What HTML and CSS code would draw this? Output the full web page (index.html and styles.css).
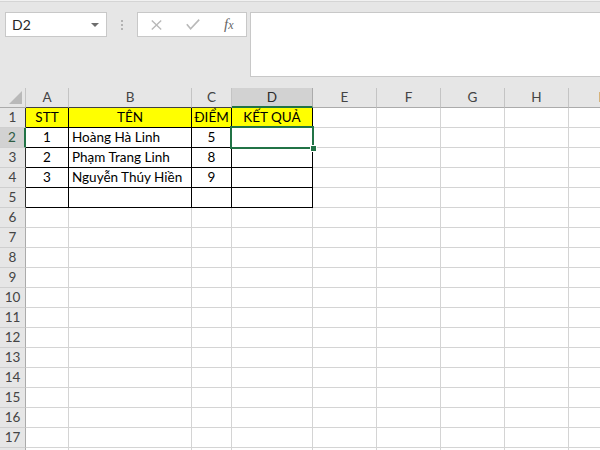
FILE: index.html
```html
<!DOCTYPE html>
<html lang="vi">
<head>
<meta charset="utf-8">
<title>Excel</title>
<link rel="stylesheet" href="styles.css">
</head>
<body>
<div class="app">
  <div class="formula-bar">
    <div class="namebox"><span class="ref">D2</span><span class="caret"></span></div>
    <div class="grip"><i></i><i></i><i></i></div>
    <div class="buttons">
      <svg class="ico-x" width="11" height="10" viewBox="0 0 11 10"><path d="M0.8 0.5 L10.2 9.5 M10.2 0.5 L0.8 9.5" stroke="#b9b9b9" stroke-width="1.4" fill="none"/></svg>
      <svg class="ico-ok" width="14" height="11" viewBox="0 0 14 11"><path d="M0.8 5.2 L4.6 9.8 L13.2 0.6" stroke="#b9b9b9" stroke-width="1.6" fill="none"/></svg>
      <span class="fx">f<small>x</small></span>
    </div>
    <div class="formula-input"></div>
  </div>

  <div class="sheet">
    <div class="row head">
      <div class="c corner"><svg width="26" height="20" viewBox="0 0 26 20"><polygon points="22,3 22,16 9,16" fill="#b9b9b9"/></svg></div>
      <div class="c ch dk">A</div><div class="c ch dk">B</div><div class="c ch dk">C</div><div class="c ch sel">D</div>
      <div class="c ch">E</div><div class="c ch">F</div><div class="c ch">G</div><div class="c ch">H</div><div class="c ch">I</div>
    </div>
    <div class="row">
      <div class="c rh bk">1</div>
      <div class="c b y ctr">STT</div><div class="c b y ctr">TÊN</div><div class="c b y ctr">ĐIỂM</div><div class="c b y ctr">KẾT QUẢ</div>
      <div class="c"></div><div class="c"></div><div class="c"></div><div class="c"></div><div class="c"></div>
    </div>
    <div class="row">
      <div class="c rh sel">2</div>
      <div class="c b ctr">1</div><div class="c b txt">Hoàng Hà Linh</div><div class="c b ctr">5</div><div class="c b"></div>
      <div class="c"></div><div class="c"></div><div class="c"></div><div class="c"></div><div class="c"></div>
    </div>
    <div class="row">
      <div class="c rh bk">3</div>
      <div class="c b ctr">2</div><div class="c b txt">Phạm Trang Linh</div><div class="c b ctr">8</div><div class="c b"></div>
      <div class="c"></div><div class="c"></div><div class="c"></div><div class="c"></div><div class="c"></div>
    </div>
    <div class="row">
      <div class="c rh bk">4</div>
      <div class="c b ctr">3</div><div class="c b txt">Nguyễn Thúy Hiền</div><div class="c b ctr">9</div><div class="c b"></div>
      <div class="c"></div><div class="c"></div><div class="c"></div><div class="c"></div><div class="c"></div>
    </div>
    <div class="row">
      <div class="c rh bk">5</div>
      <div class="c b"></div><div class="c b"></div><div class="c b"></div><div class="c b"></div>
      <div class="c"></div><div class="c"></div><div class="c"></div><div class="c"></div><div class="c"></div>
    </div>
    <div class="row"><div class="c rh">6</div><div class="c"></div><div class="c"></div><div class="c"></div><div class="c"></div><div class="c"></div><div class="c"></div><div class="c"></div><div class="c"></div><div class="c"></div></div>
    <div class="row"><div class="c rh">7</div><div class="c"></div><div class="c"></div><div class="c"></div><div class="c"></div><div class="c"></div><div class="c"></div><div class="c"></div><div class="c"></div><div class="c"></div></div>
    <div class="row"><div class="c rh">8</div><div class="c"></div><div class="c"></div><div class="c"></div><div class="c"></div><div class="c"></div><div class="c"></div><div class="c"></div><div class="c"></div><div class="c"></div></div>
    <div class="row"><div class="c rh">9</div><div class="c"></div><div class="c"></div><div class="c"></div><div class="c"></div><div class="c"></div><div class="c"></div><div class="c"></div><div class="c"></div><div class="c"></div></div>
    <div class="row"><div class="c rh">10</div><div class="c"></div><div class="c"></div><div class="c"></div><div class="c"></div><div class="c"></div><div class="c"></div><div class="c"></div><div class="c"></div><div class="c"></div></div>
    <div class="row"><div class="c rh">11</div><div class="c"></div><div class="c"></div><div class="c"></div><div class="c"></div><div class="c"></div><div class="c"></div><div class="c"></div><div class="c"></div><div class="c"></div></div>
    <div class="row"><div class="c rh">12</div><div class="c"></div><div class="c"></div><div class="c"></div><div class="c"></div><div class="c"></div><div class="c"></div><div class="c"></div><div class="c"></div><div class="c"></div></div>
    <div class="row"><div class="c rh">13</div><div class="c"></div><div class="c"></div><div class="c"></div><div class="c"></div><div class="c"></div><div class="c"></div><div class="c"></div><div class="c"></div><div class="c"></div></div>
    <div class="row"><div class="c rh">14</div><div class="c"></div><div class="c"></div><div class="c"></div><div class="c"></div><div class="c"></div><div class="c"></div><div class="c"></div><div class="c"></div><div class="c"></div></div>
    <div class="row"><div class="c rh">15</div><div class="c"></div><div class="c"></div><div class="c"></div><div class="c"></div><div class="c"></div><div class="c"></div><div class="c"></div><div class="c"></div><div class="c"></div></div>
    <div class="row"><div class="c rh">16</div><div class="c"></div><div class="c"></div><div class="c"></div><div class="c"></div><div class="c"></div><div class="c"></div><div class="c"></div><div class="c"></div><div class="c"></div></div>
    <div class="row"><div class="c rh">17</div><div class="c"></div><div class="c"></div><div class="c"></div><div class="c"></div><div class="c"></div><div class="c"></div><div class="c"></div><div class="c"></div><div class="c"></div></div>
    <div class="row"><div class="c rh">18</div><div class="c"></div><div class="c"></div><div class="c"></div><div class="c"></div><div class="c"></div><div class="c"></div><div class="c"></div><div class="c"></div><div class="c"></div></div>

    <div class="selection"><span class="handle"></span></div>
  </div>
</div>
</body>
</html>
```

FILE: styles.css
```css
html, body {
  margin: 0;
  padding: 0;
}
body {
  width: 600px;
  height: 450px;
  overflow: hidden;
  background: #e6e6e6;
  font-family: Lato, "Open Sans", "Liberation Sans", sans-serif;
  font-size: 13.5px;
  color: #000;
}
.app {
  width: 600px;
  height: 450px;
  overflow: hidden;
  background: #f1f1f1;
}

/* ---------- formula bar ---------- */
.formula-bar {
  display: flex;
  align-items: flex-start;
  height: 87px;
  box-sizing: border-box;
  margin-top: 1px;
  padding-top: 10px;
  border-top: 1px solid #d5d5d5;
  background: #e6e6e6;
}
.namebox {
  margin-left: 5px;
  width: 102px;
  height: 25px;
  box-sizing: border-box;
  border: 1px solid #c8c8c8;
  background: #fff;
  display: flex;
  align-items: center;
  justify-content: space-between;
  padding: 0 7px 0 6px;
}
.ref {
  font-size: 14px;
  color: #262626;
}
.caret {
  width: 0;
  height: 0;
  border-left: 4px solid transparent;
  border-right: 4px solid transparent;
  border-top: 4px solid #6d6d6d;
  margin-top: 1px;
}
.grip {
  width: 30px;
  height: 25px;
  display: flex;
  flex-direction: column;
  align-items: center;
  justify-content: center;
  gap: 2px;
}
.grip i {
  display: block;
  width: 2px;
  height: 2px;
  background: #b3b3b3;
}
.buttons {
  width: 110px;
  height: 25px;
  box-sizing: border-box;
  border: 1px solid #c8c8c8;
  background: #fff;
  display: flex;
  align-items: center;
}
.ico-x {
  margin-left: 13px;
}
.ico-ok {
  margin-left: 24px;
}
.fx {
  margin-left: 24px;
  font-family: "Liberation Serif", "DejaVu Serif", serif;
  font-style: italic;
  font-size: 15px;
  color: #666;
  line-height: 1;
}
.fx small {
  font-size: 12px;
}
.formula-input {
  margin-left: 3px;
  flex: 1;
  height: 65px;
  box-sizing: border-box;
  background: #fff;
  border: 1px solid #c8c8c8;
  border-right: none;
}

/* ---------- sheet ---------- */
.sheet {
  position: relative;
  background: #fff;
}
.row {
  display: grid;
  grid-template-columns: 26px 43px 123px 40px 81px 64px 64px 64px 64px 64px;
  height: 20px;
}
.c {
  box-sizing: border-box;
  height: 20px;
  border-right: 1px solid #d4d4d4;
  border-bottom: 1px solid #d4d4d4;
  line-height: 19px;
  white-space: nowrap;
  overflow: hidden;
}
.ctr {
  text-align: center;
}
.txt {
  padding-left: 3px;
}
.y {
  background: #ffff00;
}
.b {
  border-right-color: #000;
  border-bottom-color: #000;
}

/* headers */
.head .c {
  background: #e6e6e6;
  border-right-color: #c4c4c4;
  border-bottom-color: #ababab;
}
.ch {
  text-align: center;
  color: #444;
}
.head .c.dk {
  border-bottom-color: #404040;
}
.corner {
  padding: 0;
  line-height: 0;
}
.head .c.sel {
  background: #d2d2d2;
  color: #2b2b2b;
  border-bottom: 2px solid #217346;
  border-right-color: #ababab;
}
.rh {
  background: #e6e6e6;
  color: #444;
  text-align: center;
  border-right-color: #ababab;
  border-bottom-color: #cfcfcf;
}
.rh.bk {
  border-right-color: #303030;
}
.rh.sel {
  background: #d2d2d2;
  color: #2f5d44;
  border-right: 2px solid #217346;
}

/* active cell outline (overlay) */
.selection {
  position: absolute;
  left: 230px;
  top: 38px;
  width: 84px;
  height: 23px;
  box-sizing: border-box;
  border: 2px solid #217346;
  pointer-events: none;
}
.handle {
  position: absolute;
  right: -5px;
  bottom: -5px;
  width: 5px;
  height: 5px;
  background: #217346;
  border: 1px solid #fff;
}
```
